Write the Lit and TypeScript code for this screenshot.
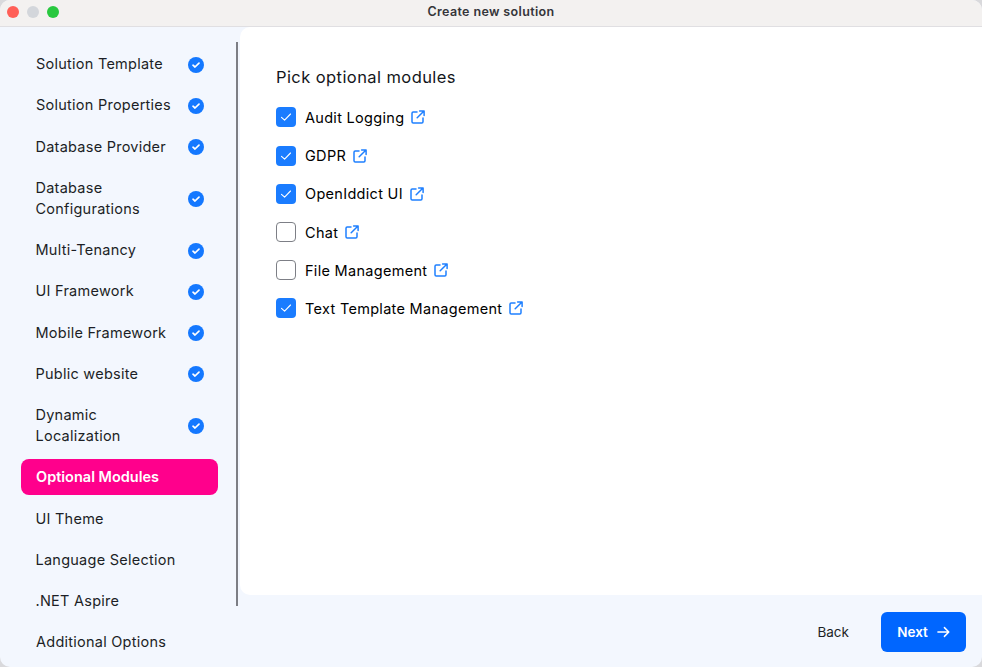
import { LitElement, html, css, svg } from "lit";
import { customElement } from "lit/decorators.js";

const steps: { label: string[]; done?: boolean; active?: boolean; tight?: boolean }[] = [
  { label: ["Solution Template"], done: true },
  { label: ["Solution Properties"], done: true },
  { label: ["Database Provider"], done: true, tight: true },
  { label: ["Database", "Configurations"], done: true, tight: true },
  { label: ["Multi-Tenancy"], done: true, tight: true },
  { label: ["UI Framework"], done: true, tight: true },
  { label: ["Mobile Framework"], done: true, tight: true },
  { label: ["Public website"], done: true, tight: true },
  { label: ["Dynamic", "Localization"], done: true, tight: true },
  { label: ["Optional Modules"], active: true },
  { label: ["UI Theme"], tight: true },
  { label: ["Language Selection"], tight: true },
  { label: [".NET Aspire"], tight: true },
  { label: ["Additional Options"] },
];

const modules: [string, boolean][] = [
  ["Audit Logging", true],
  ["GDPR", true],
  ["OpenIddict UI", true],
  ["Chat", false],
  ["File Management", false],
  ["Text Template Management", true],
];

const doneIcon = svg`<svg class="done" viewBox="0 0 16 16" width="16" height="16"><circle cx="8" cy="8" r="8" fill="#1478ff"/><path d="M5 8.2 7 10 11 6.1" fill="none" stroke="#fff" stroke-width="1.7" stroke-linecap="round" stroke-linejoin="round"/></svg>`;
const checkIcon = svg`<svg viewBox="0 0 20 20" width="20" height="20"><path d="M5.5 10.3 8.6 13.2 14.5 7" fill="none" stroke="#fff" stroke-width="1.1" stroke-linecap="round" stroke-linejoin="round"/></svg>`;
const linkIcon = svg`<svg class="ext" viewBox="0 0 14 14" width="14" height="14"><path d="M6 2H2.2C1.5 2 1 2.5 1 3.2v8.6c0 .7.5 1.2 1.2 1.2h8.6c.7 0 1.2-.5 1.2-1.2V8M8.6 .9h4.5v4.5M13 1 6.2 7.8" fill="none" stroke="#1f80ff" stroke-width="1.5" stroke-linecap="round" stroke-linejoin="round"/></svg>`;
const arrowIcon = svg`<svg viewBox="0 0 14 12" width="13" height="12"><path d="M1 6H12.5M8 1.3 12.7 6 8 10.7" fill="none" stroke="#fff" stroke-width="1.6" stroke-linecap="round" stroke-linejoin="round"/></svg>`;

@customElement("app-root")
export class AppRoot extends LitElement {
  static styles = css`
    :host {
      display: block;
      width: 982px;
      height: 667px;
      background: #d9d9dc;
      font-family: Inter, "Liberation Sans", sans-serif;
      color: #1c1f26;
      overflow: hidden;
    }
    .window {
      height: 100%;
      display: flex;
      flex-direction: column;
      border-radius: 10px;
      overflow: hidden;
      background: #f3f7fe;
    }
    .titlebar {
      height: 26px;
      flex: none;
      background: #f3f1f0;
      border-bottom: 1px solid #e0dfe2;
      display: flex;
      align-items: center;
      justify-content: center;
      position: relative;
      font-size: 12.5px;
      line-height: 22px;
      font-weight: 600;
      color: #35353a;
      letter-spacing: 0.36px;
    }
    .lights {
      position: absolute;
      left: 7px;
      top: 6px;
      display: flex;
      gap: 8px;
    }
    .lights i {
      width: 12px;
      height: 12px;
      border-radius: 50%;
    }
    .title { margin-bottom: 2px; }
    .red { background: #ff5f57; }
    .grey { background: #d3d6db; }
    .green { background: #28c83f; }
    .body {
      flex: 1;
      display: flex;
      min-height: 0;
    }
    .side {
      width: 240px;
      flex: none;
      position: relative;
      padding: 18.5px 22px 0 21px;
      box-sizing: border-box;
      display: flex;
      flex-direction: column;
      gap: 5.27px;
    }
    .bar {
      position: absolute;
      left: 236px;
      top: 15px;
      width: 2px;
      height: 564px;
      background: #7c7e85;
    }
    .step {
      display: flex;
      align-items: center;
      justify-content: space-between;
      flex: none;
      padding: 7.5px 14px 7.5px 15px;
      box-sizing: border-box;
      border-radius: 8px;
      font-size: 14.5px;
      line-height: 21px;
      letter-spacing: 0.25px;
    }
    .step.tight { padding-left: 14.5px; }
    .step.active {
      background: #ff008c;
      color: #fff;
      font-weight: 600;
      letter-spacing: 0;
    }
    .step span { display: block; }
    .done { flex: none; margin-top: 2px; }
    .right {
      flex: 1;
      display: flex;
      flex-direction: column;
      min-width: 0;
    }
    .panel {
      height: 568px;
      flex: none;
      box-sizing: border-box;
      background: #fff;
      border-radius: 10px 0 0 10px;
      padding: 40px 36px;
    }
    h2 {
      margin: 0 0 10.4px;
      font-size: 16.5px;
      line-height: 21px;
      font-weight: 400;
      color: #14161b;
      letter-spacing: 0.42px;
    }
    .mod {
      display: flex;
      align-items: center;
      height: 38.2px;
      font-size: 14.5px;
      font-weight: 400;
      color: #000;
      letter-spacing: 0.3px;
    }
    .box {
      width: 20px;
      height: 20px;
      flex: none;
      box-sizing: border-box;
      border-radius: 4px;
      margin-right: 9px;
      background: #1a7cff;
    }
    .box svg { display: block; }
    .box.off {
      background: #fff;
      border: 1.3px solid #7d7f86;
    }
    .ext { margin-left: 7px; flex: none; }
    .foot {
      flex: 1;
      display: flex;
      align-items: center;
      justify-content: flex-end;
      padding: 2px 16px 0 0;
      gap: 32px;
    }
    .back {
      font-size: 13.5px;
      font-weight: 400;
      color: #1c1f26;
    }
    .next {
      width: 85px;
      height: 40px;
      border-radius: 6px;
      background: #0066ff;
      color: #fff;
      font-size: 13.5px;
      font-weight: 600;
      display: flex;
      align-items: center;
      justify-content: center;
      gap: 9px;
    }
    .next svg { display: block; }
  `;

  render() {
    return html`
      <div class="window">
        <div class="titlebar">
          <div class="lights"><i class="red"></i><i class="grey"></i><i class="green"></i></div>
          <div class="title">Create new solution</div>
        </div>
        <div class="body">
          <div class="side">
            ${steps.map(
              (s) => html`<div class="step ${s.active ? "active" : ""} ${s.tight ? "tight" : ""}">
                <div>${s.label.map((l) => html`<span>${l}</span>`)}</div>
                ${s.done ? doneIcon : ""}
              </div>`
            )}
            <div class="bar"></div>
          </div>
          <div class="right">
            <div class="panel">
              <h2>Pick optional modules</h2>
              ${modules.map(
                ([name, on]) => html`<div class="mod">
                  <div class="box ${on ? "" : "off"}">${on ? checkIcon : ""}</div>
                  ${name}${linkIcon}
                </div>`
              )}
            </div>
            <div class="foot">
              <div class="back">Back</div>
              <div class="next">Next ${arrowIcon}</div>
            </div>
          </div>
        </div>
      </div>
    `;
  }
}
